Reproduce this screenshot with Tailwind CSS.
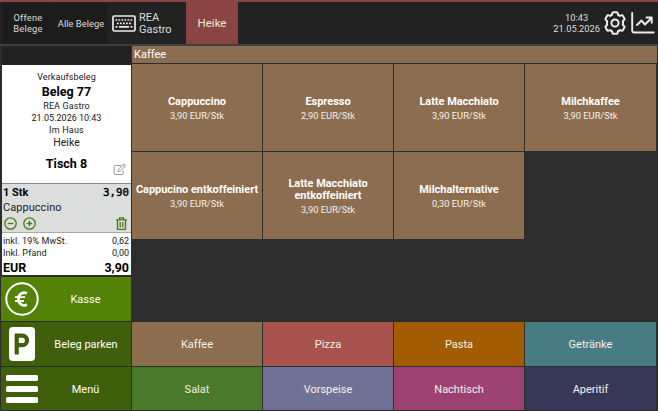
<!DOCTYPE html>
<html lang="de">
<head>
    <meta charset="UTF-8">
    <meta name="viewport" content="width=device-width, initial-scale=1.0">
    <title>REA Gastro Kasse</title>
    <script src="https://cdn.jsdelivr.net/npm/@tailwindcss/browser@4"></script>
</head>
<body class="w-[658px] h-[411px] overflow-hidden bg-[#2d2d2d] text-white font-['Roboto',sans-serif] flex flex-col">
    <!-- Top bar -->
    <header class="h-[46px] shrink-0 border-t-2 border-t-[#8a4444] border-b-2 border-b-[#3c3f3e] bg-[#222222] pl-[2px] pr-[3px] flex">
        <button class="w-[52px] h-[41px] mt-px bg-[#1c1c1c] text-[9.3px] leading-[11px] text-[#dedede] tracking-[0.2px] pb-px">Offene<br>Belege</button>
        <button class="w-[52px] h-[41px] mt-px ml-px bg-[#1c1c1c] text-[9.3px] leading-[11px] text-[#dedede] tracking-[0.05px] whitespace-nowrap">Alle Belege</button>
        <div class="w-[79px] pl-[5px] flex items-center">
            <svg class="w-[24px] h-[17px] shrink-0" viewBox="0 0 24 17" fill="none">
                <rect x="1" y="1" width="22" height="15" rx="1.3" stroke="#ececec" stroke-width="1.7" />
                <path d="M3.5 5h17M5 8.3h15" stroke="#ececec" stroke-width="1.7" stroke-dasharray="1.7 1.3" />
                <path d="M3.5 11.8h2M7 11.8h10M18.5 11.8h2" stroke="#ececec" stroke-width="1.7" />
            </svg>
            <div class="ml-[3px] text-[11px] leading-[12.5px] text-[#dedede] pt-[2px]">REA<br>Gastro</div>
        </div>
        <button class="w-[52px] h-[42px] bg-[#8a4444] text-[11.5px] text-[#f5ead8] pt-[2px]">Heike</button>
        <div class="ml-auto flex items-center">
            <div class="text-[9.3px] leading-[11px] text-[#dedede] flex flex-col items-center">
                <span>10:43</span>
                <span>21.05.2026</span>
            </div>
            <svg class="w-[24px] h-[24px] ml-[3px]" viewBox="0 0 24 24" fill="none" stroke="#ececec" stroke-width="2" stroke-linejoin="round">
                <path d="M9.3 2.3Q9.5 1.2 10.6 1.2h2.8q1.1 0 1.3 1.1l.3 1.5q1 .4 1.9 1.1l1.5-.5q1.1-.4 1.6.6l1.4 2.4q.5 1-.3 1.7l-1.200 1q.2 1.9 0 3.800l1.200 1q.8.7.3 1.700L20 19q-.5 1-1.600.6l-1.500-.5q-.9.7-1.900 1.100l-.3 1.500q-.2 1.100-1.300 1.100h-2.800q-1.100 0-1.300-1.100L9 20.200q-1-.4-1.900-1.100l-1.500.5Q4.500 20 4 19l-1.400-2.400q-.5-1 .3-1.700l1.200-1q-.2-1.900 0-3.800l-1.200-1q-.8-.7-.3-1.700L4 5q.5-1 1.600-.6l1.500.5Q8 4.200 9 3.800z" />
                <circle cx="12" cy="12" r="3.6" />
            </svg>
            <svg class="w-[24px] h-[22px] ml-[4px]" viewBox="0 0 24 22" fill="none" stroke="#ececec" stroke-width="1.9" stroke-linecap="round" stroke-linejoin="round">
                <path d="M1.2 1v17.5q0 2 2 2h19.5" />
                <path d="M6 13l4.5-4.5 3.5 4 6.5-6.5M15.5 5.5h5.2v5.2" />
            </svg>
        </div>
    </header>

    <div class="flex h-[365px]">
        <!-- Receipt and actions -->
        <aside class="w-[129px] ml-[2px] mr-[1px] flex flex-col">
            <div class="h-[19px] bg-[#222222]"></div>
            <section class="h-[118px] bg-white text-[#202020] text-center relative pt-[7px] text-[9px] leading-[12px]">
                <p class="leading-[11px] tracking-[0.1px]">Verkaufsbeleg</p>
                <h1 class="text-[12.5px] leading-[18px] font-bold text-black">Beleg 77</h1>
                <p class="leading-[11px] tracking-[0.1px]">REA Gastro</p>
                <p>21.05.2026 10:43</p>
                <p class="tracking-[0.2px]">Im Haus</p>
                <p class="text-[10.5px] leading-[14px]">Heike</p>
                <h2 class="text-[12.5px] leading-[16px] mt-[6px] font-bold text-black">Tisch 8</h2>
                <svg class="absolute right-[4px] bottom-[7px] w-[14px] h-[13px]" viewBox="0 0 14 13" fill="none" stroke="#999999" stroke-linejoin="round">
                    <path d="M8 2.5H2.2q-1 0-1 1v7q0 1 1 1h7q1 0 1-1V7.5" />
                    <path d="M5 8.5l.5-2.3L11 .8l1.9 1.8-5.5 5.4zM9.7 2.1l1.9 1.9" />
                </svg>
            </section>
            <section class="h-[50px] bg-[#dcdedd] border-t border-b border-t-[#888888] border-b-[#aaaaaa] pl-[1px] pr-[2px] text-[#202020]">
                <div class="flex justify-between text-[11px] leading-[17px] font-bold text-black">
                    <span>1 Stk</span>
                    <span class="font-['DejaVu_Sans_Mono',monospace] text-[10.8px] font-normal [-webkit-text-stroke:0.4px_black]">3,90</span>
                </div>
                <p class="text-[11px] leading-[14px] tracking-[0.05px]">Cappuccino</p>
                <div class="flex items-center pt-[2px] pl-[1px] pr-[2px]">
                    <svg class="w-[13px] h-[13px]" viewBox="0 0 13 13" fill="none" stroke="#477c0c" stroke-width="1.3">
                        <circle cx="6.5" cy="6.5" r="5.7" /><path d="M3.7 6.5h5.6" />
                    </svg>
                    <svg class="w-[13px] h-[13px] ml-[6px]" viewBox="0 0 13 13" fill="none" stroke="#477c0c" stroke-width="1.3">
                        <circle cx="6.5" cy="6.5" r="5.7" /><path d="M3.7 6.5h5.6M6.5 3.7v5.6" />
                    </svg>
                    <svg class="w-[11px] h-[13px] ml-auto" viewBox="0 0 11 13" fill="none" stroke="#477c0c" stroke-width="1.3">
                        <path d="M0 2.9h11M3.5 2.7V.8h4v1.9M1.5 3v9.3h8V3M4.2 5v5.5M6.8 5v5.5" />
                    </svg>
                </div>
            </section>
            <section class="h-[42px] bg-white pl-[1px] pr-[2px] text-[#202020] text-[9px]">
                <div class="flex justify-between leading-[12px] pt-[2px]"><span class="tracking-[0.1px]">inkl. 19% MwSt.</span><span>0,62</span></div>
                <div class="flex justify-between leading-[12px]"><span class="tracking-[0.1px]">Inkl. Pfand</span><span>0,00</span></div>
                <div class="flex justify-between text-[12.5px] leading-[17px] font-bold text-black"><span>EUR</span><span>3,90</span></div>
            </section>
            <nav class="mt-[2px] -ml-px flex flex-col gap-px text-[11px]">
                <button class="h-[44px] bg-[#538206] flex items-center">
                    <svg class="w-[34px] h-[34px] ml-[4px]" viewBox="0 0 34 34" fill="none" stroke="#ffffff">
                        <circle cx="17" cy="17" r="15.7" stroke-width="2" />
                        <path d="M22 11.2a6 6 0 0 0-8.5 5.8 6 6 0 0 0 8.5 5.8" stroke-width="2.7" />
                        <path d="M10 15.2h10M10 19h9" stroke-width="1.8" />
                    </svg>
                    <span class="flex-1 text-center pl-[1px] pt-[2px]">Kasse</span>
                </button>
                <button class="h-[44px] bg-[#405f0a] flex items-center">
                    <svg class="w-[26px] h-[34px] ml-[8px] mr-[4px]" viewBox="0 0 26 34" fill="none">
                        <rect x="0" y="0" width="26" height="34" rx="4" fill="#ffffff" />
                        <path d="M7.7 27.5V8.7h5.6a4.7 4.7 0 0 1 0 9.4H8" stroke="#405f0a" stroke-width="4.2" />
                    </svg>
                    <span class="flex-1 text-center pl-[2px] pt-[3px]">Beleg parken</span>
                </button>
                <button class="h-[43px] bg-[#405f0a] flex items-center">
                    <svg class="w-[32px] h-[28px] ml-[5px] mr-px" viewBox="0 0 32 28" fill="#ffffff">
                        <rect width="32" height="6" rx="1.5" /><rect y="11" width="32" height="6" rx="1.5" /><rect y="22" width="32" height="6" rx="1.5" />
                    </svg>
                    <span class="flex-1 text-center pl-[1px] pt-[3px]">Menü</span>
                </button>
            </nav>
        </aside>

        <!-- Articles and categories -->
        <main class="w-[525px] flex flex-col">
            <h2 class="h-[17px] bg-[#8d6d4f] text-[11px] leading-[18px] pl-[2px]">Kaffee</h2>
            <div id="articles" class="mt-px grid grid-cols-[130px_130px_130px_131px] gap-px text-center"></div>
            <div id="categories" class="mt-auto mb-px grid grid-cols-[130px_130px_130px_131px] grid-rows-[44px_43px] gap-px text-[11px] text-[#f4f1ea]"></div>
        </main>
    </div>

    <script>
        const articles = [
            { name: "Cappuccino", price: "3,90" },
            { name: "Espresso", price: "2,90" },
            { name: "Latte Macchiato", price: "3,90" },
            { name: "Milchkaffee", price: "3,90" },
            { name: "Cappucino entkoffeiniert", price: "3,90" },
            { name: "Latte Macchiato<br>entkoffeiniert", price: "3,90" },
            { name: "Milchalternative", price: "0,30" }
        ];

        const categories = [
            { name: "Kaffee", color: "bg-[#8d6d4f]" },
            { name: "Pizza", color: "bg-[#a8534e]" },
            { name: "Pasta", color: "bg-[#a35b00]" },
            { name: "Getränke", color: "bg-[#487c83]" },
            { name: "Salat", color: "bg-[#487a2a]" },
            { name: "Vorspeise", color: "bg-[#707197]" },
            { name: "Nachtisch", color: "bg-[#9c4270]" },
            { name: "Aperitif", color: "bg-[#373757]" }
        ];

        document.getElementById('articles').innerHTML = articles.map(a => `
            <button class="h-[87px] bg-[#8d6d4f] flex flex-col items-center justify-center pt-[2px]">
                <span class="text-[11px] leading-[12px] font-bold tracking-[-0.03px] whitespace-nowrap">${a.name}</span>
                <span class="text-[9.3px] leading-[12px] mt-[2px] text-[#f4f1ea]">${a.price} EUR/Stk</span>
            </button>
        `).join('');

        document.getElementById('categories').innerHTML = categories.map(c => `
            <button class="pt-[3px] ${c.color}">${c.name}</button>
        `).join('');
    </script>
</body>
</html>
